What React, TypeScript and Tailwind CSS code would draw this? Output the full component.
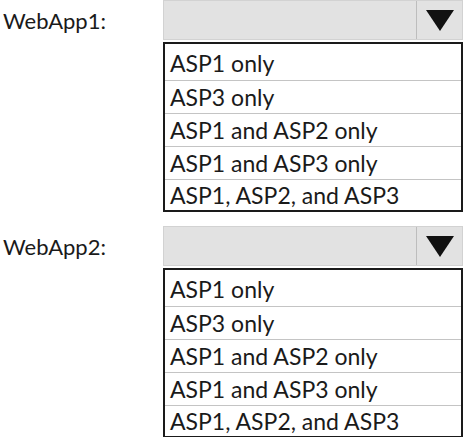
const options = ["ASP1 only", "ASP3 only", "ASP1 and ASP2 only", "ASP1 and ASP3 only", "ASP1, ASP2, and ASP3"];

function Dropdown({ label }: { label: string }) {
  return (
    <div className="flex">
      <div className="flex h-[40px] w-[163px] items-center pl-[3px] text-[22px] text-[#1a1a1a]">{label}</div>
      <div className="flex w-[300px] flex-col">
        <div className="flex h-[40px] border border-[#d2d2d2] bg-[#e2e2e2]">
          <div className="flex-1" />
          <div className="flex w-[46px] items-center justify-center border-l border-[#bdbdbd]">
            <svg width="28" height="21" viewBox="0 0 28 21">
              <path d="M0 0 H28 L14 21 Z" fill="#111" />
            </svg>
          </div>
        </div>
        <div className="mt-[2px] border-2 border-[#1a1a1a] bg-white">
          {options.map((o, i) => (
            <div
              key={o}
              className={
                i === 0
                  ? "flex h-[37px] items-end border-b border-[#c4c4c4] pb-[2px] pl-[5px] text-[23px] leading-[30px] text-[#1a1a1a]"
                  : i === options.length - 1
                    ? "flex h-[30px] items-end pb-[0px] pl-[5px] text-[23px] leading-[30px] text-[#1a1a1a]"
                    : "flex h-[33px] items-end border-b border-[#c4c4c4] pb-[1px] pl-[5px] text-[23px] leading-[30px] text-[#1a1a1a]"
              }
            >
              {o}
            </div>
          ))}
        </div>
      </div>
    </div>
  );
}

export default function App() {
  return (
    <div className="flex h-[437px] w-[464px] flex-col gap-[14px] overflow-hidden bg-white font-['Lato',sans-serif]">
      <Dropdown label="WebApp1:" />
      <Dropdown label="WebApp2:" />
    </div>
  );
}
